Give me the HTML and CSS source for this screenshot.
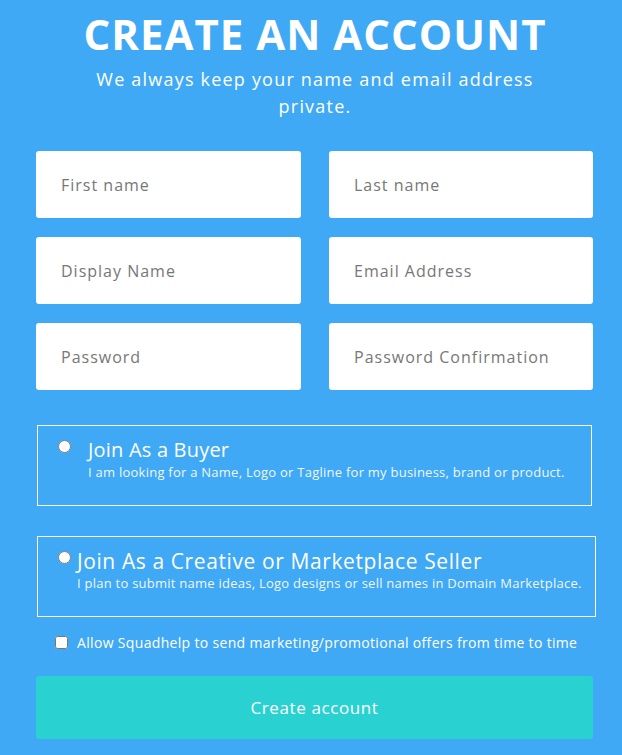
FILE: index.html
```html
<!DOCTYPE html>
<html>
<head>
<meta charset="utf-8">
<link rel="stylesheet" href="styles.css">
</head>
<body>
<div class="page">
  <h1 class="title">CREATE AN ACCOUNT</h1>
  <p class="subtitle">We always keep your name and email address<br>private.</p>
  <form class="form">
    <div class="grid">
      <input class="field" type="text" placeholder="First name">
      <input class="field" type="text" placeholder="Last name">
      <input class="field" type="text" placeholder="Display Name">
      <input class="field" type="text" placeholder="Email Address">
      <input class="field" type="password" placeholder="Password">
      <input class="field" type="password" placeholder="Password Confirmation">
    </div>
    <label class="choice choice-buyer">
      <input class="radio" type="radio" name="role">
      <span class="choice-text">
        <span class="choice-title">Join As a Buyer</span>
        <span class="choice-desc">I am looking for a Name, Logo or Tagline for my business, brand or product.</span>
      </span>
    </label>
    <label class="choice choice-seller">
      <input class="radio" type="radio" name="role">
      <span class="choice-text">
        <span class="choice-title">Join As a Creative or Marketplace Seller</span>
        <span class="choice-desc">I plan to submit name ideas, Logo designs or sell names in Domain Marketplace.</span>
      </span>
    </label>
    <label class="consent">
      <input class="check" type="checkbox">
      <span>Allow Squadhelp to send marketing/promotional offers from time to time</span>
    </label>
    <button class="submit" type="button">Create account</button>
  </form>
</div>
</body>
</html>
```
FILE: styles.css
```css
html, body {
  margin: 0;
  padding: 0;
  background: #3fa9f5;
}
body {
  font-family: "Open Sans", "Liberation Sans", sans-serif;
  color: #fff;
}
.page {
  width: 622px;
  padding: 9px 0 0;
  box-sizing: border-box;
}
.title {
  margin: 0;
  padding-left: 8px;
  text-align: center;
  font-size: 42px;
  line-height: 50px;
  font-weight: 700;
  letter-spacing: 1px;
}
.subtitle {
  margin: 7px 0 0;
  padding-left: 8px;
  text-align: center;
  font-size: 18px;
  line-height: 27px;
  letter-spacing: 1.2px;
}
.form {
  margin: 31px 29px 0 36px;
}
.grid {
  display: grid;
  grid-template-columns: 265px 264px;
  column-gap: 28px;
  row-gap: 19px;
}
.field {
  height: 67px;
  box-sizing: border-box;
  border: none;
  border-radius: 3px;
  background: #fff;
  padding: 0 25px;
  font-family: inherit;
  font-size: 16px;
  letter-spacing: 1px;
  color: #555;
  outline: none;
}
.field::placeholder {
  color: #777;
}
.choice {
  display: flex;
  align-items: flex-start;
  box-sizing: border-box;
  border: 1px solid #fff;
  height: 81px;
  margin-left: 1px;
}
.choice-buyer {
  width: 555px;
  margin-top: 35px;
  padding: 14px 0 0 20px;
}
.choice-seller {
  width: 559px;
  margin-top: 30px;
  padding: 14px 0 0 20px;
}
.radio {
  margin: 0;
  width: 13px;
  height: 13px;
  flex: none;
}
.choice-text {
  display: flex;
  flex-direction: column;
}
.choice-buyer .choice-text { margin-left: 17px; margin-top: -3px; }
.choice-seller .choice-text { margin-left: 6px; margin-top: -3px; }
.choice-title {
  font-size: 20px;
  line-height: 26px;
  letter-spacing: 0.2px;
}
.choice-seller .choice-title {
  font-size: 21px;
  letter-spacing: 0.6px;
}
.choice-desc {
  font-size: 13px;
  line-height: 18px;
  letter-spacing: 0.25px;
  color: #f0f6fd;
}
.consent {
  display: flex;
  align-items: center;
  margin: 16px 0 0 19px;
  font-size: 14px;
  letter-spacing: 0.33px;
}
.check {
  margin: 0 9px 0 0;
  width: 13px;
  height: 13px;
}
.submit {
  display: block;
  margin-top: 24px;
  width: 557px;
  height: 63px;
  border: none;
  border-radius: 3px;
  background: #29d2d0;
  color: #fff;
  font-family: inherit;
  font-size: 17px;
  letter-spacing: 0.6px;
}
```
